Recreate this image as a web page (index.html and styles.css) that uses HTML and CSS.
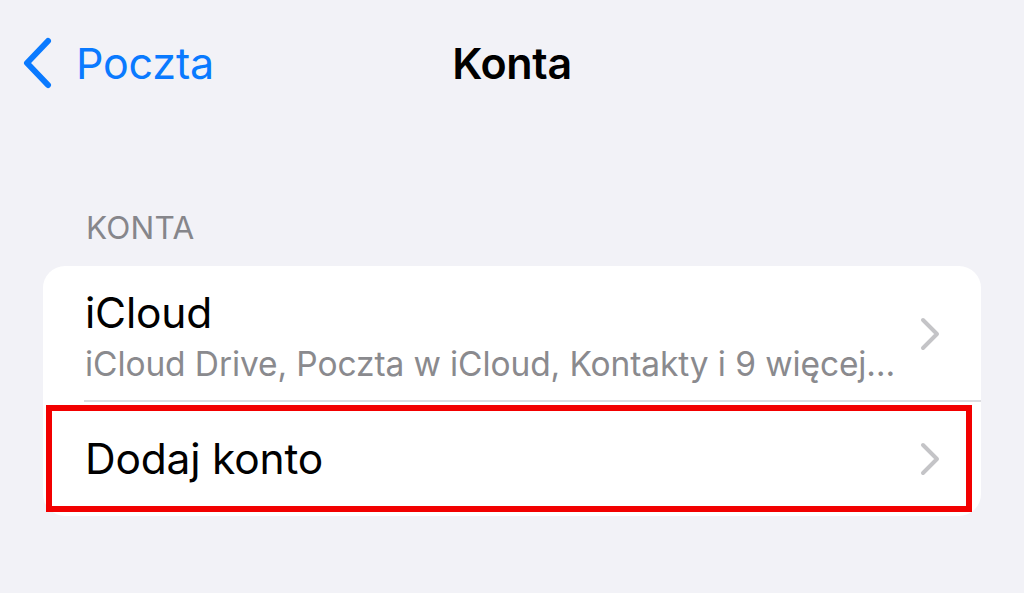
FILE: index.html
```html
<!DOCTYPE html>
<html lang="pl">
<head>
<meta charset="utf-8">
<link rel="stylesheet" href="styles.css">
</head>
<body>
<div class="screen">
  <header class="nav">
    <div class="nav-left">
      <svg class="back-icon" width="30" height="52" viewBox="0 0 30 52"><path d="M26 4 L5 26 L26 48" fill="none" stroke="#0a7aff" stroke-width="6" stroke-linecap="round" stroke-linejoin="round"/></svg>
      <span class="back-label">Poczta</span>
    </div>
    <h1 class="nav-title">Konta</h1>
    <div class="nav-right"></div>
  </header>

  <section class="group">
    <div class="group-header">KONTA</div>
    <div class="card">
      <div class="row row-icloud">
        <div class="row-text">
          <div class="row-title">iCloud</div>
          <div class="row-sub">iCloud Drive, Poczta w iCloud, Kontakty i 9 więcej…</div>
        </div>
        <svg class="chev" width="22" height="34" viewBox="0 0 22 34"><path d="M4 3 L18 17 L4 31" fill="none" stroke="#c4c4c7" stroke-width="4" stroke-linecap="round" stroke-linejoin="round"/></svg>
      </div>
      <div class="row row-add">
        <div class="row-text">
          <div class="row-title">Dodaj konto</div>
        </div>
        <svg class="chev" width="22" height="34" viewBox="0 0 22 34"><path d="M4 3 L18 17 L4 31" fill="none" stroke="#c4c4c7" stroke-width="4" stroke-linecap="round" stroke-linejoin="round"/></svg>
        <div class="highlight"></div>
      </div>
    </div>
  </section>
</div>
</body>
</html>
```

FILE: styles.css
```css
* { box-sizing: border-box; }
html, body {
  margin: 0;
  padding: 0;
  background: #f2f2f7;
}
body {
  font-family: Inter, "Noto Sans", "Liberation Sans", sans-serif;
  color: #000;
  width: 1024px;
  height: 593px;
  overflow: hidden;
}
.screen {
  display: flex;
  flex-direction: column;
}
.nav {
  display: grid;
  grid-template-columns: 1fr auto 1fr;
  align-items: center;
  height: 126px;
  padding: 0 22px;
}
.nav-left {
  display: flex;
  align-items: center;
  gap: 24px;
  color: #0a7aff;
}
.back-icon { display: block; }
.back-label {
  font-size: 43px;
  font-weight: 400;
  letter-spacing: -0.2px;
}
.nav-title {
  margin: 0;
  font-size: 43px;
  font-weight: 600;
  letter-spacing: -0.3px;
}
.group {
  padding: 82px 43px 0 43px;
}
.group-header {
  font-size: 31.5px;
  color: #86868b;
  padding-left: 43px;
  line-height: 40px;
  margin-bottom: 18px;
  letter-spacing: 0.2px;
}
.card {
  background: #fff;
  border-radius: 22px;
}
.row {
  position: relative;
  display: flex;
  align-items: center;
  padding-left: 42px;
  padding-right: 40px;
}
.row-text { flex: 1; min-width: 0; }
.row-icloud {
  height: 136px;
}
.row-icloud::after {
  content: "";
  position: absolute;
  left: 41px;
  right: 0;
  bottom: 0;
  height: 2px;
  background: #dcdce0;
}
.row-add {
  height: 114px;
}
.row-title {
  font-size: 42.5px;
  line-height: 52px;
  letter-spacing: -0.2px;
}
.row-icloud .row-text { padding-top: 4px; }
.row-sub {
  font-size: 33.5px;
  line-height: 44px;
  margin-top: 3px;
  color: #8a8a8e;
  white-space: nowrap;
  letter-spacing: -0.1px;
}
.chev { display: block; flex: none; }
.highlight {
  position: absolute;
  left: 3px;
  right: 9px;
  top: 3px;
  bottom: 4px;
  border: 6px solid #f20000;
}
```
